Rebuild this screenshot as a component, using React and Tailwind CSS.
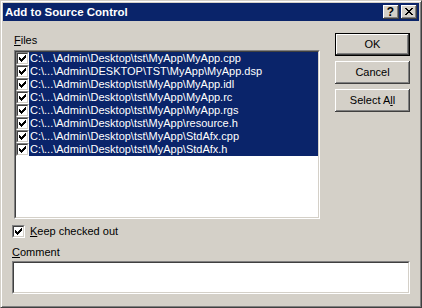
const files = [
    'C:\\...\\Admin\\Desktop\\tst\\MyApp\\MyApp.cpp',
    'C:\\...\\Admin\\DESKTOP\\TST\\MyApp\\MyApp.dsp',
    'C:\\...\\Admin\\Desktop\\tst\\MyApp\\MyApp.idl',
    'C:\\...\\Admin\\Desktop\\tst\\MyApp\\MyApp.rc',
    'C:\\...\\Admin\\Desktop\\tst\\MyApp\\MyApp.rgs',
    'C:\\...\\Admin\\Desktop\\tst\\MyApp\\resource.h',
    'C:\\...\\Admin\\Desktop\\tst\\MyApp\\StdAfx.cpp',
    'C:\\...\\Admin\\Desktop\\tst\\MyApp\\StdAfx.h',
];

// classic 7x7 check glyph
const checkPixels = [
    [6, 0, 1], [5, 1, 2], [0, 2, 1], [4, 2, 3], [0, 3, 2], [3, 3, 3],
    [0, 4, 5], [1, 5, 3], [2, 6, 1],
];

function CheckBox() {
    return (
        <div className="w-[13px] h-[13px] shrink-0 border border-t-[#808080] border-l-[#808080] border-r-white border-b-white">
            <div className="w-full h-full bg-white border border-t-[#404040] border-l-[#404040] border-r-[#d4d0c8] border-b-[#d4d0c8] flex items-center justify-center">
                <svg width="7" height="7" viewBox="0 0 7 7" shapeRendering="crispEdges">
                    {checkPixels.map(([x, y, w], i) => (
                        <rect key={i} x={x} y={y} width={w} height="1" fill="#000" />
                    ))}
                </svg>
            </div>
        </div>
    );
}

function Button({ children, isDefault }) {
    return (
        <button
            className={
                'w-[75px] h-[23px] bg-[#d4d0c8] flex items-center justify-center leading-[13px] ' +
                (isDefault
                    ? 'border border-black shadow-[inset_-1px_-1px_#404040,inset_1px_1px_#fff,inset_-2px_-2px_#808080]'
                    : 'shadow-[inset_-1px_-1px_#404040,inset_1px_1px_#fff,inset_-2px_-2px_#808080]')
            }>
            {children}
        </button>
    );
}

function CaptionButton({ children }) {
    return (
        <div className="w-[16px] h-[14px] bg-[#d4d0c8] flex items-center justify-center shadow-[inset_-1px_-1px_#404040,inset_1px_1px_#fff,inset_-2px_-2px_#808080]">
            {children}
        </div>
    );
}

export default function App() {
    return (
        <div className="w-[422px] h-[308px] bg-[#d4d0c8] border border-t-[#d4d0c8] border-l-[#d4d0c8] border-r-[#404040] border-b-[#404040] shadow-[inset_1px_1px_#fff,inset_-1px_-1px_#808080] p-[2px] flex flex-col font-['Liberation_Sans',Arial,sans-serif] text-[11px] text-black">
            {/* Title bar */}
            <div className="h-[18px] shrink-0 bg-[#0a246a] flex items-center pl-[2px] pr-[2px]">
                <span className="flex-1 text-white font-bold text-[11.5px] leading-[14px]">Add to Source Control</span>
                <div className="flex gap-[2px]">
                    <CaptionButton>
                        <span className="font-bold text-[12px] leading-none -mt-[1px] -ml-[1px]">?</span>
                    </CaptionButton>
                    <CaptionButton>
                        <svg width="8" height="7" viewBox="0 0 8 7" shapeRendering="crispEdges" className="-mt-[1px] -ml-[1px]">
                            <path d="M0 0h2v1h-2zM6 0h2v1h-2zM1 1h2v1h-2zM5 1h2v1h-2zM2 2h4v1h-4zM3 3h2v1h-2zM2 4h4v1h-4zM1 5h2v1h-2zM5 5h2v1h-2zM0 6h2v1h-2zM6 6h2v1h-2z" fill="#000" />
                        </svg>
                    </CaptionButton>
                </div>
            </div>

            {/* Body */}
            <div className="flex-1 flex flex-col pt-[12px]">
                <div className="flex">
                    <div className="ml-[11px] w-[306px] flex flex-col">
                        <div className="mt-[1px] h-[13px] leading-[13px]"><u>F</u>iles</div>
                        <div className="mt-[3px] h-[169px] border border-t-[#808080] border-l-[#808080] border-r-white border-b-white">
                            <div className="w-full h-full bg-white border border-t-[#404040] border-l-[#404040] border-r-[#d4d0c8] border-b-[#d4d0c8] flex flex-col">
                                {files.map((f) => (
                                    <div key={f} className="h-[13px] flex">
                                        <CheckBox />
                                        <div className="flex-1 bg-[#0a246a] text-white pl-[1px] leading-[13px] whitespace-nowrap overflow-hidden">{f}</div>
                                    </div>
                                ))}
                            </div>
                        </div>
                    </div>
                    <div className="ml-[15px] flex flex-col gap-[5px]">
                        <Button isDefault>OK</Button>
                        <Button>Cancel</Button>
                        <Button>Select A<u>l</u>l</Button>
                    </div>
                </div>

                <div className="mt-[6px] ml-[9px] h-[13px] flex items-center">
                    <CheckBox />
                    <span className="ml-[5px] leading-[13px]"><u>K</u>eep checked out</span>
                </div>

                <div className="mt-[8px] ml-[9px] h-[13px] leading-[13px]"><u>C</u>omment</div>
                <div className="mt-[2px] ml-[9px] w-[398px] h-[33px] border border-t-[#808080] border-l-[#808080] border-r-white border-b-white">
                    <div className="w-full h-full bg-white border border-t-[#404040] border-l-[#404040] border-r-[#d4d0c8] border-b-[#d4d0c8]" />
                </div>
            </div>
        </div>
    );
}
